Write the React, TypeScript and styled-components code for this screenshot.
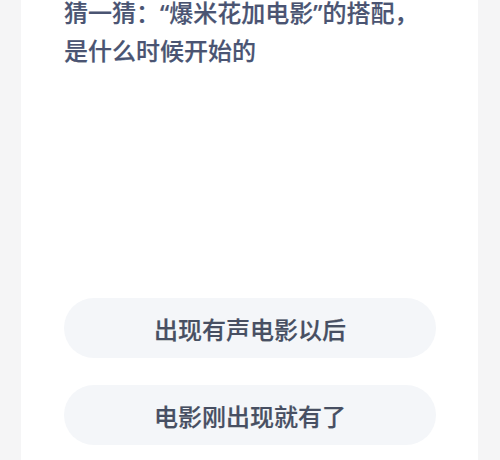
import React from 'react'
import styled, { createGlobalStyle } from 'styled-components'

const GlobalStyle = createGlobalStyle`
    html, body {
        margin: 0;
        padding: 0;
        background: #f5f5f6;
    }
    body {
        font-family: "Noto Sans", "Noto Sans CJK SC", sans-serif;
        -webkit-font-smoothing: antialiased;
    }
`

const Page = styled.div`
    height: 460px;
    overflow: hidden;
    padding: 0 22px 0 21px;
    background: #f5f5f6;
`

const Card = styled.div`
    display: flex;
    flex-direction: column;
    height: 100%;
    box-sizing: border-box;
    padding: 0 42px 15px 43px;
    background: #ffffff;
`

const Question = styled.h1`
    margin: -6px 0 0;
    font-size: 24px;
    line-height: 38px;
    font-weight: 500;
    color: #4a5472;
    -webkit-text-stroke: 0.2px #4a5472;
`

const Options = styled.div`
    display: flex;
    flex-direction: column;
    gap: 27px;
    margin-top: auto;
`

const Option = styled.button`
    display: flex;
    align-items: center;
    justify-content: center;
    height: 60px;
    width: 100%;
    border: none;
    border-radius: 30px;
    background: #f4f6f9;
    font-family: inherit;
    font-size: 24px;
    font-weight: 500;
    color: #474f62;
    -webkit-text-stroke: 0.2px #474f62;
    cursor: pointer;
`

const options = ['出现有声电影以后', '电影刚出现就有了']

export default function App() {
    return (
        <>
            <GlobalStyle />
            <Page>
                <Card>
                    <Question>猜一猜：“爆米花加电影”的搭配，是什么时候开始的</Question>
                    <Options>
                        {options.map(text => (
                            <Option key={text}>{text}</Option>
                        ))}
                    </Options>
                </Card>
            </Page>
        </>
    )
}
